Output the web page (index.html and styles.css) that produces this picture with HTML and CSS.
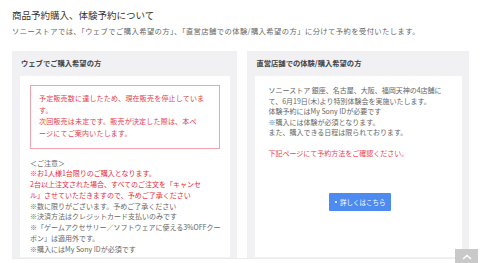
FILE: index.html
```html
<!DOCTYPE html>
<html lang="ja">
<head>
    <meta charset="UTF-8">
    <title>商品予約購入、体験予約について</title>
    <link rel="stylesheet" href="styles.css">
</head>
<body>

<div class="page">
    <h1 class="title">商品予約購入、体験予約について</h1>
    <p class="intro">ソニーストアでは、「ウェブでご購入希望の方」、「直営店舗での体験/購入希望の方」に分けて予約を受付いたします。</p>

    <div class="cols">
        <div class="panel">
            <div class="panel-head">ウェブでご購入希望の方</div>
            <div class="panel-body left">
                <div class="alert">
                    予定販売数に達したため、現在販売を停止しています。<br>
                    次回販売は未定です。販売が決定した際は、本ペ<br>ージにてご案内いたします。
                </div>
                <div class="notes">
                    ＜ご注意＞<br>
                    <span class="red">※お1人様1台限りのご購入となります。<br>
                    2台以上注文された場合、すべてのご注文を「キャンセ<br>ル」させていただきますので、予めご了承ください</span><br>
                    ※数に限りがございます。予めご了承ください<br>
                    ※決済方法はクレジットカード支払いのみです<br>
                    ※「ゲームアクセサリー／ソフトウェアに使える3%OFFクー<br>ポン」は適用外です。<br>
                    ※購入にはMy Sony IDが必須です
                </div>
            </div>
        </div>

        <div class="panel">
            <div class="panel-head">直営店舗での体験/購入希望の方</div>
            <div class="panel-body right">
                <p class="shop-text">
                    ソニーストア 銀座、名古屋、大阪、福岡天神の4店舗に<br>
                    て、6月19日(木)より特別体験会を実施いたします。<br>
                    体験予約にはMy Sony IDが必要です<br>
                    ※購入には体験が必須となります。<br>
                    また、購入できる日程は限られております。
                </p>
                <p class="shop-text red">下記ページにて予約方法をご確認ください。</p>
                <div class="btn-wrap">
                    <a class="btn" href="#"><span class="dot"></span>詳しくはこちら</a>
                </div>
            </div>
        </div>
    </div>
</div>

<a class="to-top" href="#">
    <svg width="10" height="6" viewBox="0 0 10 6"><path d="M1 5 L5 1.5 L9 5" fill="none" stroke="#fff" stroke-width="1.4"/></svg>
</a>

</body>
</html>
```

FILE: styles.css
```css
*{box-sizing:border-box}
body{
    margin:0;
    background:#fff;
    font-family:"Noto Sans CJK JP","Noto Sans",sans-serif;
    color:#555;
}
.page{
    padding:9px 11px 0 12px;
}
.title{
    margin:0;
    font-size:9.5px;
    line-height:13px;
    font-weight:normal;
    color:#333;
}
.intro{
    margin:3.5px 0 0;
    font-size:7.3px;
    line-height:11px;
    letter-spacing:0.42px;
    color:#666;
}
.cols{
    margin-top:14.5px;
    display:grid;
    grid-template-columns:1fr 1fr;
    gap:10px;
    border-bottom:1px solid #ececec;
}
.panel{
    background:#f1f1f4;
    padding:0 7px 1px 8px;
    display:flex;
    flex-direction:column;
}
.panel-head{
    height:25px;
    line-height:25px;
    padding-left:1px;
    font-size:7.3px;
    font-weight:bold;
    color:#444;
}
.panel-body{
    flex:1;
    background:#fff;
}
.left{
    padding:9px 10px 3px;
}
.alert{
    border:1px solid #f2a3ab;
    color:#e0404f;
    padding:7px 8px 9px;
    font-size:7px;
    line-height:11.5px;
    letter-spacing:0.2px;
}
.notes{
    margin-top:8.5px;
    font-size:7px;
    line-height:10.75px;
    color:#666;
    white-space:nowrap;
}
.red{color:#e62b3e}
.right{
    padding:9px 10px 10px 13px;
}
.shop-text{
    margin:0;
    font-size:7px;
    line-height:10.5px;
    color:#666;
}
.shop-text.red{
    margin-top:10.5px;
    color:#e84452;
}
.btn-wrap{
    margin-top:25px;
    text-align:center;
}
.btn{
    display:inline-flex;
    align-items:center;
    gap:3px;
    width:62px;
    height:18px;
    justify-content:center;
    background:#4e8bf0;
    border-radius:1px;
    color:#fff;
    font-size:6.5px;
    text-decoration:none;
}
.dot{
    width:2px;
    height:2px;
    border-radius:50%;
    background:#fff;
}
.to-top{
    position:fixed;
    right:2px;
    bottom:-4px;
    width:23px;
    height:18px;
    background:#c9c9c9;
    display:flex;
    align-items:flex-start;
    justify-content:center;
    padding-top:5px;
}
```
